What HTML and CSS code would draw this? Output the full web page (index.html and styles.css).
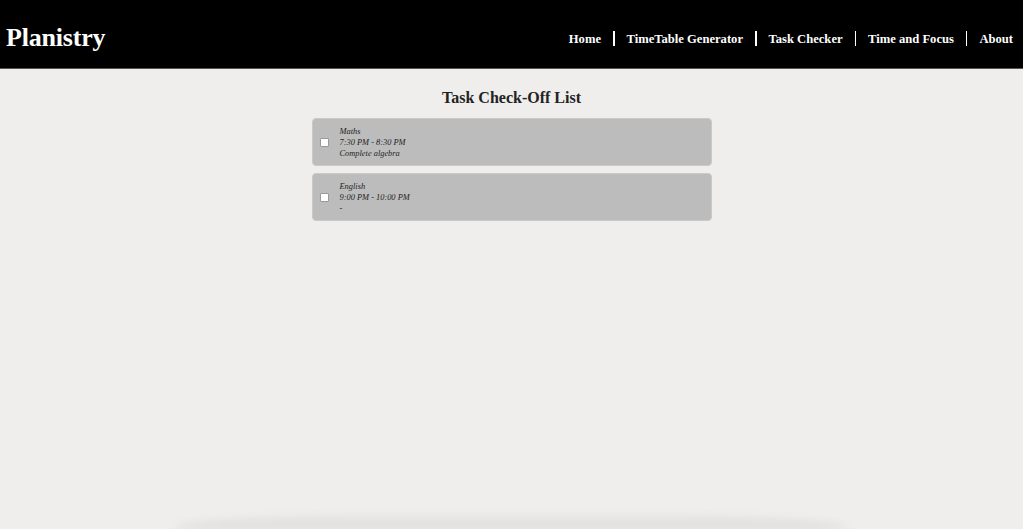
FILE: index.html
```html
<!DOCTYPE html>
<html lang="en">
<head>
<meta charset="utf-8">
<title>Planistry - Task Checker</title>
<link rel="stylesheet" href="styles.css">
</head>
<body>
<header class="topbar">
  <div class="brand">Planistry</div>
  <nav class="nav">
    <a href="#" class="nav-link">Home</a>
    <span class="sep"></span>
    <a href="#" class="nav-link">TimeTable Generator</a>
    <span class="sep"></span>
    <a href="#" class="nav-link">Task Checker</a>
    <span class="sep"></span>
    <a href="#" class="nav-link">Time and Focus</a>
    <span class="sep"></span>
    <a href="#" class="nav-link">About</a>
  </nav>
</header>
<main class="main">
  <h1 class="title">Task Check-Off List</h1>
  <ul class="tasks">
    <li class="task">
      <input type="checkbox" class="check">
      <div class="task-text">
        <div>Maths</div>
        <div>7:30 PM - 8:30 PM</div>
        <div>Complete algebra</div>
      </div>
    </li>
    <li class="task">
      <input type="checkbox" class="check">
      <div class="task-text">
        <div>English</div>
        <div>9:00 PM - 10:00 PM</div>
        <div>-</div>
      </div>
    </li>
  </ul>
</main>
<div class="window-shadow"></div>
</body>
</html>
```
FILE: styles.css
```css
html, body {
  margin: 0;
  padding: 0;
  height: 100%;
}
body {
  background: #efeeec;
  font-family: "Liberation Serif", serif;
  color: #222;
  overflow: hidden;
}
.topbar {
  height: 69px;
  background: #000;
  border-bottom: 1px solid #555;
  display: flex;
  align-items: center;
  justify-content: space-between;
  padding: 0 10px 0 6px;
  box-sizing: border-box;
}
.brand {
  color: #fff;
  font-weight: bold;
  font-size: 26px;
  letter-spacing: -0.2px;
  padding-top: 8px;
}
.nav {
  display: flex;
  align-items: center;
  gap: 12px;
  padding-top: 10px;
}
.nav-link {
  color: #fff;
  text-decoration: none;
  font-weight: bold;
  font-size: 12.6px;
}
.sep {
  width: 1.5px;
  height: 15px;
  background: #fff;
  margin-top: -2px;
}
.main {
  display: flex;
  flex-direction: column;
  align-items: center;
}
.title {
  margin: 18px 0 0;
  font-size: 16px;
  font-weight: bold;
  color: #222;
  line-height: 22px;
}
.tasks {
  list-style: none;
  margin: 9px 0 0;
  padding: 0;
  width: 400px;
  display: flex;
  flex-direction: column;
  gap: 7px;
}
.task {
  background: #bcbcbc;
  border: 1px solid #c9c9c9;
  border-radius: 4px;
  height: 48px;
  box-sizing: border-box;
  display: flex;
  align-items: center;
  padding-left: 7px;
}
.check {
  width: 7px;
  height: 7px;
  margin: 0 11px 0 0;
  appearance: none;
  background: #fff;
  border: 1px solid #999;
  border-radius: 1px;
  box-sizing: content-box;
}
.task-text {
  font-family: "Liberation Serif", serif;
  font-style: italic;
  font-size: 8.4px;
  line-height: 11px;
  color: #222;
}
.window-shadow {
  position: fixed;
  left: 175px;
  right: 175px;
  bottom: 0;
  height: 18px;
  background: linear-gradient(to bottom, rgba(0,0,0,0), rgba(0,0,0,0.08));
  border-radius: 50% 50% 0 0 / 100% 100% 0 0;
  filter: blur(4px);
}
```
